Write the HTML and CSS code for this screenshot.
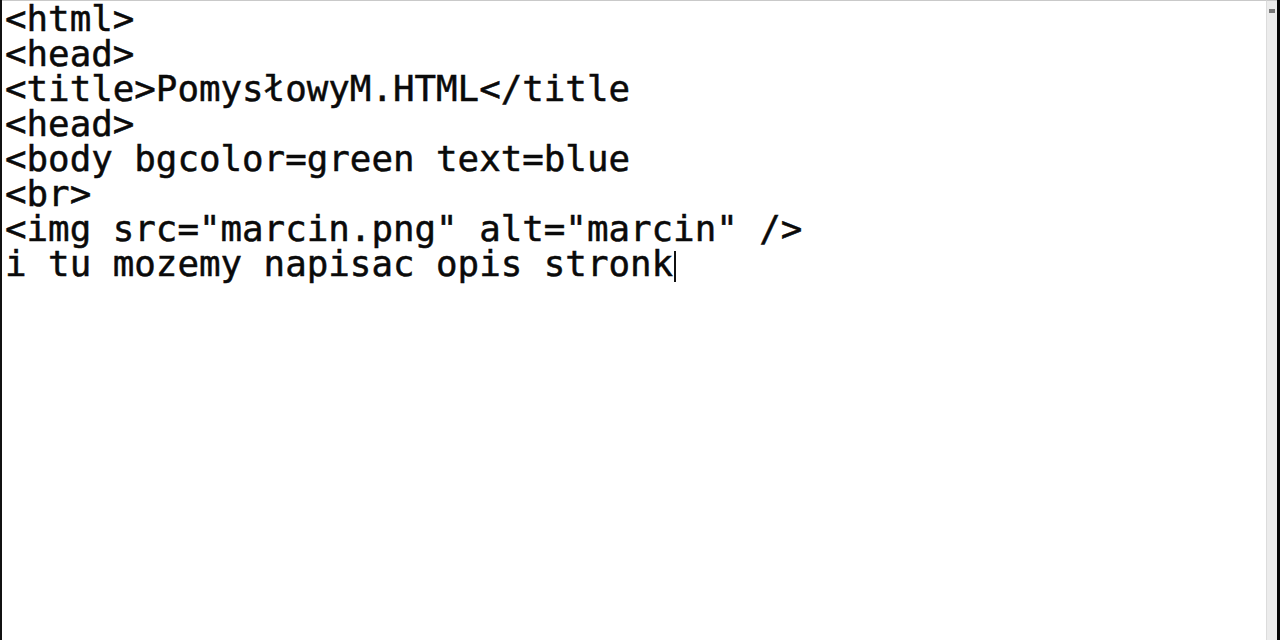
FILE: index.html
```html
<!DOCTYPE html>
<html>
<head>
<meta charset="utf-8">
<link rel="stylesheet" href="styles.css">
</head>
<body>
<div class="window">
  <div class="editor">
    <pre class="text">&lt;html&gt;
&lt;head&gt;
&lt;title&gt;PomysłowyM.HTML&lt;/title
&lt;head&gt;
&lt;body bgcolor=green text=blue
&lt;br&gt;
&lt;img src="marcin.png" alt="marcin" /&gt;
i tu mozemy napisac opis stronk<span class="caret"></span></pre>
  </div>
  <div class="scrollbar"><span class="grip"></span></div>
  <div class="edge"></div>
</div>
</body>
</html>
```
FILE: styles.css
```css
html, body {
  margin: 0;
  padding: 0;
  width: 1280px;
  height: 640px;
  overflow: hidden;
  background: #ffffff;
}
.window {
  display: flex;
  width: 1280px;
  height: 640px;
  border-left: 2px solid #111111;
  box-sizing: border-box;
}
.editor {
  flex: 1;
  border-top: 1px solid #c9c9c9;
  background: #ffffff;
  padding: 0 0 0 3px;
}
.text {
  margin: 0;
  font-family: "DejaVu Sans Mono", monospace;
  font-size: 35.8px;
  line-height: 35px;
  color: #0a0a0a;
  white-space: pre;
  -webkit-text-stroke: 0.5px #0a0a0a;
}
.caret {
  display: inline-block;
  width: 2px;
  height: 31px;
  background: #111111;
  vertical-align: -6px;
  margin-left: 1px;
}
.scrollbar {
  width: 11px;
  background: #ececec;
  border-left: 1px solid #dcdcdc;
  border-top: 1px solid #c9c9c9;
  display: flex;
  justify-content: center;
  padding-top: 8px;
  box-sizing: border-box;
}
.grip {
  width: 6px;
  height: 4px;
  background: #777777;
}
.edge {
  width: 3px;
  background: #050505;
}
```
